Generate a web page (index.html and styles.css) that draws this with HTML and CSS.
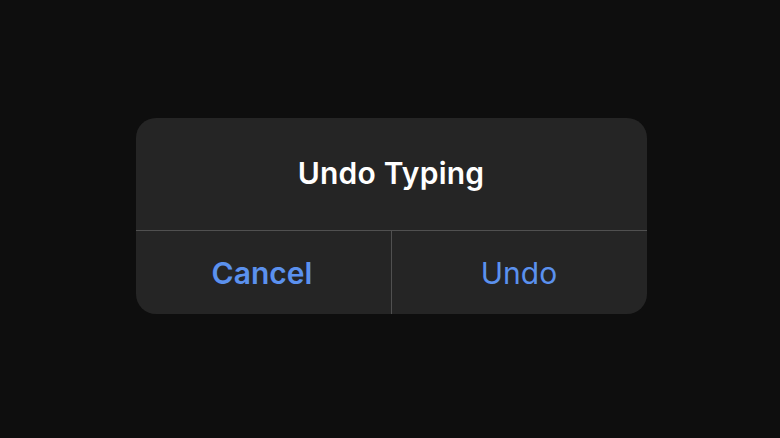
FILE: index.html
```html
<!doctype html>
<html lang="en">
    <head>
        <meta charset="UTF-8">
        <meta name="viewport" content="width=device-width, initial-scale=1.0">
        <title>Undo Typing</title>

        <link rel="stylesheet" href="styles.css">
    </head>
    <body>
        <div class="alert">
            <h2 class="alert__title">Undo Typing</h2>
            <div class="alert__actions">
                <button class="alert__btn alert__btn--cancel">Cancel</button>
                <button class="alert__btn">Undo</button>
            </div>
        </div>
    </body>
</html>
```

FILE: styles.css
```css
/* base */
:root {
    --bcg: #0e0e0e;
    --alert-bcg: #252525;
    --line: #505050;
    --blue: #5b91ee;
}

*,
*::before,
*::after {
    box-sizing: border-box;
    padding: 0;
    margin: 0;
}

body {
    display: flex;
    justify-content: center;
    align-items: flex-start;
    min-height: 100vh;
    padding-top: 118px;
    font-family: Inter, "Noto Sans", sans-serif;
    background-color: var(--bcg);
}

/* alert */
.alert {
    width: 511px;
    margin-left: 2px;
    overflow: hidden;
    border-radius: 20px;
    background-color: var(--alert-bcg);
}

.alert__title {
    display: flex;
    justify-content: center;
    align-items: center;
    height: 113px;
    padding-bottom: 2px;
    font-size: 30px;
    font-weight: 600;
    color: #fff;
    letter-spacing: 0.2px;
    border-bottom: 1px solid var(--line);
}

.alert__actions {
    display: grid;
    grid-template-columns: 256px 1fr;
    height: 83px;
}

.alert__btn {
    font-family: inherit;
    font-size: 30px;
    font-weight: 400;
    color: var(--blue);
    background: none;
    border: none;
}

.alert__btn--cancel {
    padding-right: 2px;
    font-weight: 600;
    border-right: 1px solid var(--line);
}
```
